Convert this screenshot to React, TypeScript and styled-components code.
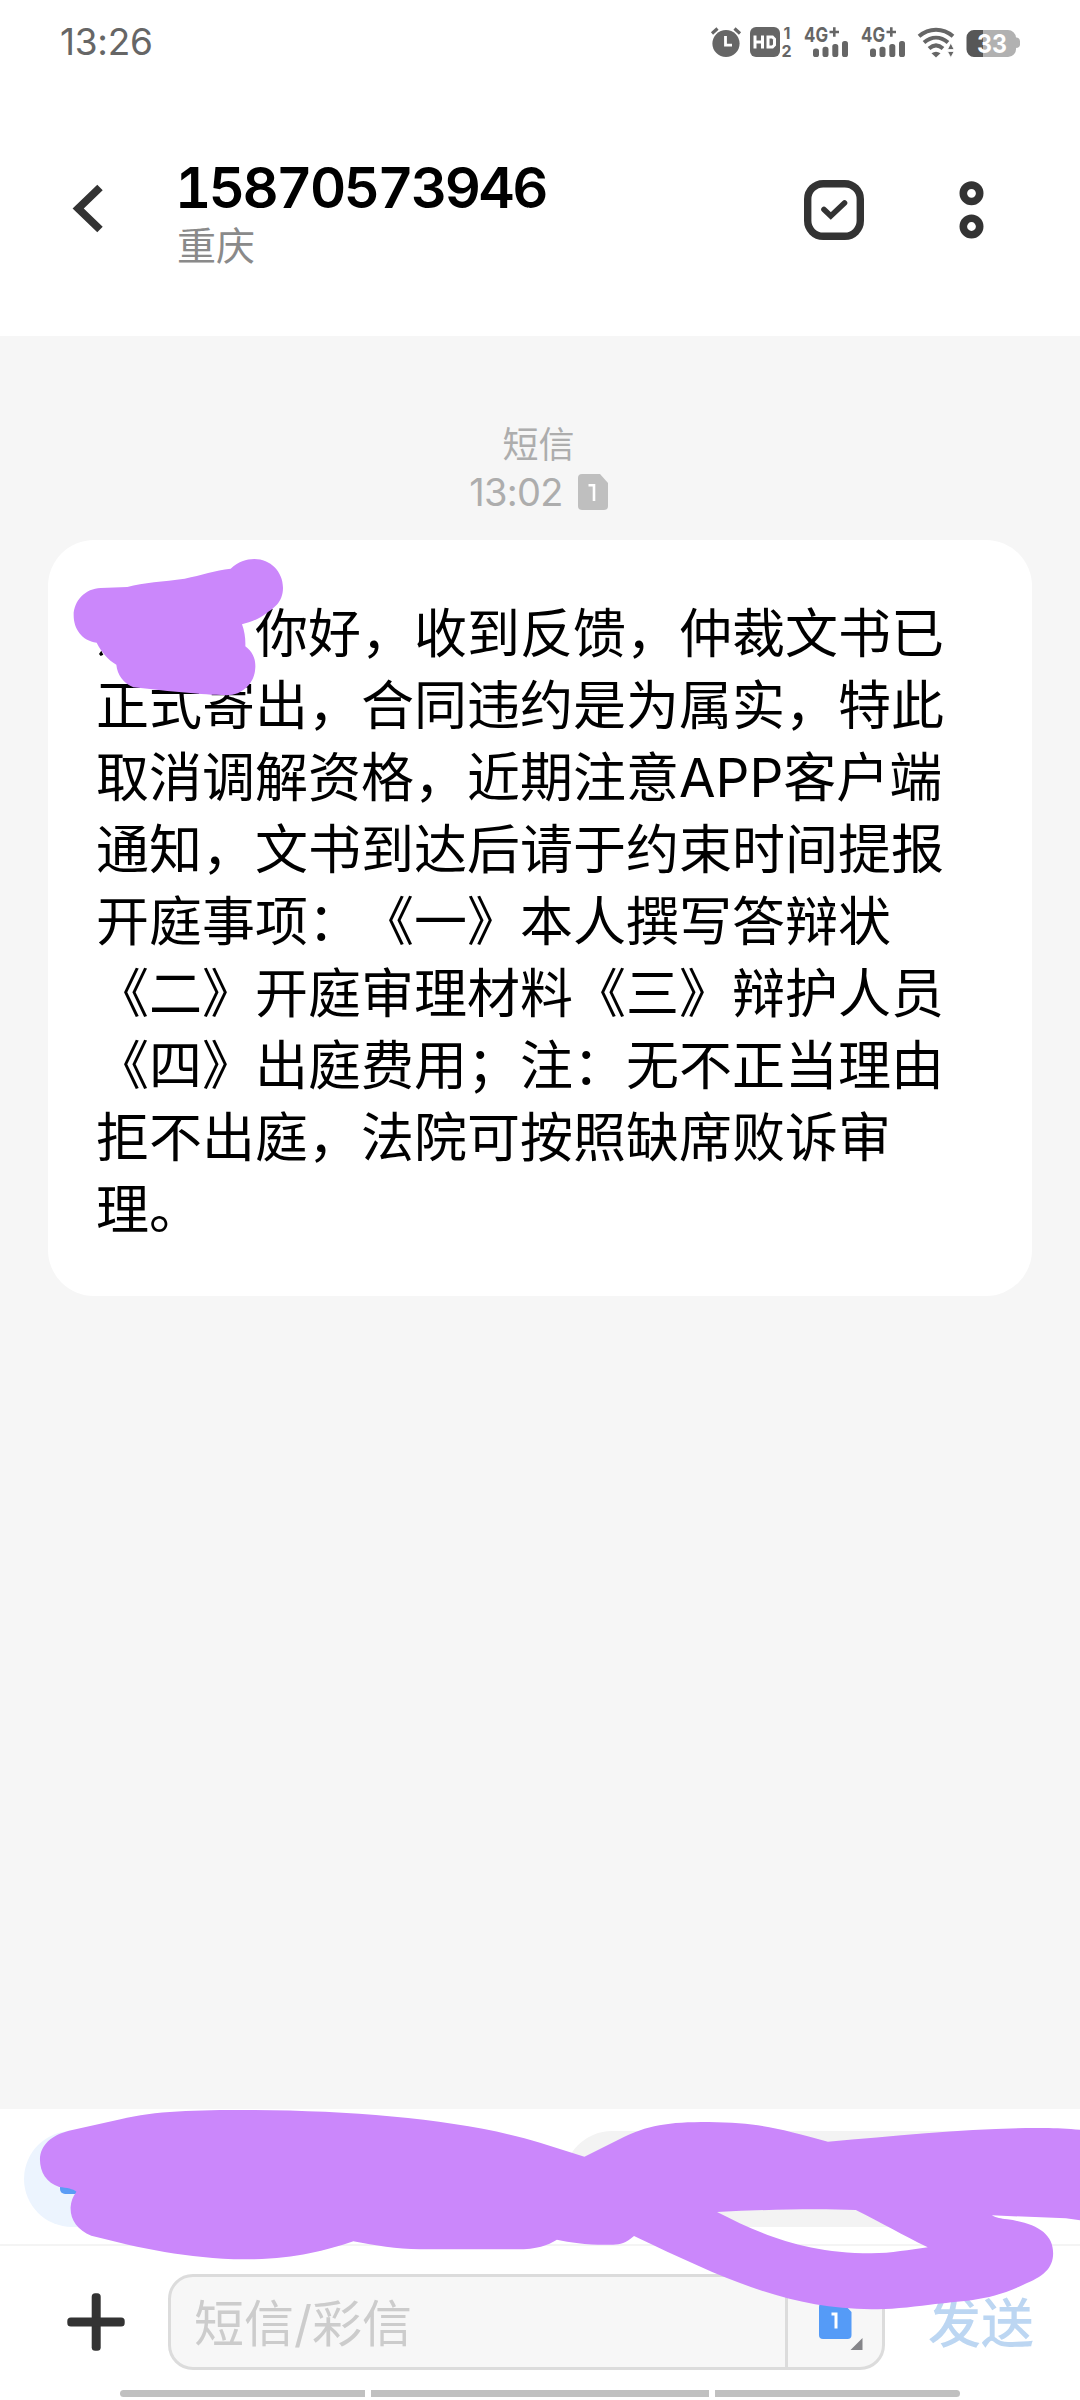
import React from 'react';
import styled, { createGlobalStyle } from 'styled-components';

const Global = createGlobalStyle`
  * { box-sizing: border-box; }
  body { margin: 0; background: #fff; }
`;

const Screen = styled.div`
  width: 1080px;
  height: 2400px;
  display: flex;
  flex-direction: column;
  overflow: hidden;
  background: #fff;
  font-family: Inter, 'Noto Sans CJK SC', sans-serif;
  text-spacing-trim: space-all;
`;

const StatusBar = styled.div`
  height: 84px;
  padding: 0 60px;
  display: flex;
  justify-content: space-between;
  align-items: center;
`;

const Clock = styled.span`
  font-size: 37px;
  line-height: 44px;
  letter-spacing: -0.3px;
  color: #666;
`;

const StatusIcons = styled.svg`
  width: 312px;
  height: 40px;
  font-family: Inter, sans-serif;
`;

const Header = styled.header`
  height: 252px;
  padding: 70px 94px 0 70px;
  display: flex;
  align-items: flex-start;
`;

const BackButton = styled.button`
  width: 36px;
  height: 52px;
  margin: 28px 69px 0 0;
  padding: 0;
  border: 0;
  background: none;
`;

const Contact = styled.div`
  flex: 1;
  display: flex;
  flex-direction: column;
`;

const PhoneNumber = styled.h1`
  margin: 0;
  font-size: 56px;
  font-weight: 600;
  line-height: 68px;
  letter-spacing: -2.5px;
  font-variant-numeric: tabular-nums;
  color: #000;
`;

const Region = styled.span`
  font-size: 39px;
  line-height: 46px;
  margin: 1px 0 0 2px;
  color: #8a8a8a;
`;

const HeaderActions = styled.div`
  margin-top: 24px;
  display: flex;
  gap: 92px;
`;

const Conversation = styled.main`
  flex: 1;
  padding: 86px 48px 0;
  background: #f6f6f6;
`;

const Stamp = styled.div`
  height: 118px;
  padding-right: 3px;
  display: flex;
  flex-direction: column;
  align-items: center;
  color: #adadad;
`;

const StampKind = styled.span`
  font-size: 36px;
  line-height: 47px;
`;

const StampTime = styled.div`
  display: flex;
  align-items: center;
  gap: 15px;
  font-size: 38px;
  line-height: 46px;
  letter-spacing: -0.7px;
`;

const Bubble = styled.article`
  position: relative;
  height: 756px;
  padding: 58px 48px 50px;
  border-radius: 46px;
  background: #fff;
`;

const Line = styled.p<{ $indent?: number }>`
  margin: 0 0 0 ${(p) => (p.$indent ?? 0) * 53}px;
  font-size: 53px;
  line-height: 72px;
  white-space: nowrap;
  color: #000;
`;

const BubbleScribble = styled.svg`
  position: absolute;
  left: -8px;
  top: -20px;
  width: 300px;
  height: 200px;
`;

const Footer = styled.footer`
  position: relative;
  height: 291px;
  background: #fff;
`;

const Chips = styled.div`
  height: 137px;
  padding: 22px 80px 0 24px;
  display: flex;
  justify-content: space-between;
  border-bottom: 2px solid #f4f4f4;
`;

const Chip = styled.div<{ $color: string; $width: number }>`
  width: ${(p) => p.$width}px;
  height: 96px;
  padding: 53px 36px 0;
  border-radius: 48px;
  background: ${(p) => p.$color};
`;

const ChipIcon = styled.div`
  width: 34px;
  height: 10px;
  border-radius: 0 0 5px 5px;
  background: #5a9cf5;
`;

const Composer = styled.div`
  height: 144px;
  padding: 28px 0 0 67px;
  display: flex;
  align-items: flex-start;
`;

const PlusIcon = styled.svg`
  width: 58px;
  height: 58px;
  margin: 19px 43px 0 0;
`;

const InputBox = styled.div`
  width: 717px;
  height: 96px;
  display: flex;
  border: 3px solid #dcdcdc;
  border-radius: 25px;
  background: #f7f7f7;
`;

const Placeholder = styled.span`
  flex: 1;
  padding-left: 23px;
  font-size: 50px;
  line-height: 95px;
  color: #ccc;
`;

const SimPicker = styled.div`
  width: 97px;
  border-left: 3px solid #dcdcdc;
`;

const SendLabel = styled.span`
  margin-left: 43px;
  font-size: 53px;
  line-height: 101px;
  font-weight: 500;
  color: #bcd6f2;
`;

const NavBars = styled.div`
  display: grid;
  grid-template-columns: 245px 338px 245px;
  gap: 6px;
  padding: 0 120px;
`;

const NavBar = styled.div<{ $radius?: string }>`
  height: 7px;
  border-radius: ${(p) => p.$radius ?? '0'};
  background: #c0c0c0;
`;

const FooterScribble = styled.svg`
  position: absolute;
  inset: 0 0 auto 0;
  width: 1080px;
  height: 291px;
`;

const PURPLE = '#cb87fb';

const lines = [
  '正式寄出，合同违约是为属实，特此',
  '取消调解资格，近期注意APP客户端',
  '通知，文书到达后请于约束时间提报',
  '开庭事项：《一》本人撰写答辩状',
  '《二》开庭审理材料《三》辩护人员',
  '《四》出庭费用；注：无不正当理由',
  '拒不出庭，法院可按照缺席败诉审',
  '理。',
];

const Signal = ({ x }: { x: number }) => (
  <g transform={`translate(${x} 0)`} fill="#666">
    <text x="0" y="20" fontSize="20.5" fontWeight="700" textLength="24" lengthAdjust="spacingAndGlyphs">4G</text>
    <path d="M25.500 10h9.500M30.300 5.300v9.500" stroke="#666" strokeWidth="2.600" />
    <rect x="9" y="26.500" width="6" height="8.500" rx="2.600" />
    <rect x="18.500" y="24.800" width="6" height="10.200" rx="2.600" />
    <rect x="28.300" y="22" width="6" height="13" rx="2.600" />
    <rect x="38" y="19" width="6" height="16" rx="2.600" />
  </g>
);

export default function App() {
  return (
    <Screen>
      <Global />
      <StatusBar>
        <Clock>13:26</Clock>
        <StatusIcons viewBox="0 0 312 40">
          <circle cx="18" cy="21.500" r="13.600" fill="#666" />
          <path d="M4 11.500l5.500-5M32 11.500l-5.500-5" stroke="#666" strokeWidth="3.200" />
          <path d="M17.500 14v9.200h6.500" stroke="#fff" strokeWidth="2.800" fill="none" />
          <rect x="42" y="5" width="30" height="30" rx="6" fill="#666" />
          <path d="M47 13.500v13M54.500 13.500v13M47 20h8M60 15v10h4.500l2-2v-6l-2-2z" stroke="#fff" strokeWidth="3" fill="none" />
          <text x="75.500" y="16.500" fontSize="16" fontWeight="700" fill="#666">1</text>
          <text x="73.500" y="34.800" fontSize="16" fontWeight="700" fill="#666">2</text>
          <Signal x={96} />
          <Signal x={153} />
          <g fill="none" stroke="#666" strokeWidth="4">
            <path d="M211 14.200C221 5.500 235 5.500 245 14.200" />
            <path d="M216 20.500C223.500 14 232.500 14 240 20.500" />
            <path d="M221 26.500C225.500 22.500 230.500 22.500 235 26.500" />
          </g>
          <path d="M223.500 31.300q4.500-3 9 0L228 35.500z" fill="#666" />
          <path d="M239.500 27.500l3.300-6.500 3.300 6.500zM239.500 29.500h6.600l-3.300 6z" fill="#666" stroke="#fff" strokeWidth="0.800" />
          <path d="M265.500 8H300a8 8 0 0 1 8 7.500c2.500 0 4 1.500 4 4v3c0 2-1.500 3.500-4 3.500a8 8 0 0 1-8 9H265.500z" fill="#b1b1b1" />
          <path d="M275 8v27h-9a7.500 7.500 0 0 1-7.500-7.500v-12A7.500 7.500 0 0 1 266 8z" fill="#575757" />
          <text x="269" y="31" fontSize="26" fontWeight="700" fill="#fff" textLength="30" lengthAdjust="spacingAndGlyphs">33</text>
        </StatusIcons>
      </StatusBar>

      <Header>
        <BackButton aria-label="back">
          <svg width="36" height="52" viewBox="0 0 36 52">
            <path d="M30 5.500L8.200 26.500L30 47.500" fill="none" stroke="#333" strokeWidth="7.800" />
          </svg>
        </BackButton>
        <Contact>
          <PhoneNumber>15870573946</PhoneNumber>
          <Region>重庆</Region>
        </Contact>
        <HeaderActions>
          <svg width="64" height="64" viewBox="0 0 64 64">
            <rect x="5.700" y="5.700" width="52.600" height="52.600" rx="15.500" fill="none" stroke="#333" strokeWidth="7.400" />
            <path d="M22 31.500L28.800 38L42.500 25" fill="none" stroke="#333" strokeWidth="5.600" strokeLinecap="round" />
          </svg>
          <svg width="28" height="64" viewBox="0 0 28 64">
            <circle cx="13.500" cy="15.300" r="8.200" fill="none" stroke="#333" strokeWidth="7.600" />
            <circle cx="13.500" cy="48.500" r="8.200" fill="none" stroke="#333" strokeWidth="7.600" />
          </svg>
        </HeaderActions>
      </Header>

      <Conversation>
        <Stamp>
          <StampKind>短信</StampKind>
          <StampTime>
            <span>13:02</span>
            <svg width="30" height="36" viewBox="0 0 30 36">
              <path d="M4 0H22L30 9V32a4 4 0 0 1-4 4H4a4 4 0 0 1-4-4V4a4 4 0 0 1 4-4z" fill="#bfbfbf" />
              <path d="M10.500 11.200h5.500V27" fill="none" stroke="#fff" strokeWidth="2.600" />
            </svg>
          </StampTime>
        </Stamp>
        <Bubble>
          <Line $indent={3}>你好，收到反馈，仲裁文书已</Line>
          {lines.map((line) => (
            <Line key={line}>{line}</Line>
          ))}
          <BubbleScribble viewBox="0 0 900 600">
            <path d="M177 402l7-10 6 12-8 4z" fill="#000" />
            <path
              fill={PURPLE}
              d="M182 204L262 201C310 187 370 185 434 176C485 165 525 151 572 146C594 125 619 117 643 117C691 117 729 155 729 203C729 248 698 266 680 279C657 298 629 307 606 313C614 335 617 357 616 379C637 395 647 415 646 442C645 490 607 526 560 526C480 524 400 515 280 502C250 489 232 464 229 434C205 420 184 396 170 368C125 363 101 326 101 286C101 242 137 205 182 204Z"
            />
          </BubbleScribble>
        </Bubble>
      </Conversation>

      <Footer>
        <Chips>
          <Chip $color="#ecf4fe" $width={500}>
            <ChipIcon />
          </Chip>
          <Chip $color="#f3f3f3" $width={436} />
        </Chips>
        <Composer>
          <PlusIcon viewBox="0 0 58 58">
            <rect x="24.700" y="0.300" width="9" height="57.400" rx="3.500" fill="#333" />
            <rect x="0.300" y="24.500" width="57.400" height="9" rx="3.500" fill="#333" />
          </PlusIcon>
          <InputBox>
            <Placeholder>短信/彩信</Placeholder>
            <SimPicker>
              <svg width="94" height="90" viewBox="0 0 94 90">
                <path d="M35 26H55L63.500 35V58a4 4 0 0 1-4 4H35a4 4 0 0 1-4-4V30a4 4 0 0 1 4-4z" fill="#559bf7" />
                <path d="M43.500 37h4.500V51.500" fill="none" stroke="#fff" strokeWidth="3" />
                <path d="M74.500 61V73H62.500z" fill="#858589" />
              </svg>
            </SimPicker>
          </InputBox>
          <SendLabel>发送</SendLabel>
        </Composer>
        <NavBars>
          <NavBar $radius="4px 0 0 4px" />
          <NavBar />
          <NavBar $radius="0 4px 4px 0" />
        </NavBars>
        <FooterScribble viewBox="0 57 3136 873" preserveAspectRatio="none">
          <path
            fill={PURPLE}
            fillRule="evenodd"
            d="M200 122L350 88C450 62 570 60 720 60C1050 62 1350 90 1568 158L1697 200L1800 147C1880 105 1940 96 2058 96C2200 98 2260 114 2404 155C2620 135 2850 112 3030 114C3070 114 3100 117 3136 119V391L3095 385L2880 376C2895 385 2905 385 2925 388C3010 400 3058 430 3058 490C3058 535 3030 560 2970 585C2870 635 2790 632 2700 644C2640 652 2580 658 2530 658C2290 655 2120 575 1841 438C1815 460 1803 464 1780 464C1710 466 1660 458 1617 449C1590 466 1560 478 1500 478H1220C1150 478 1090 466 1026 454C940 484 850 508 710 508C540 505 410 475 265 437C225 420 204 390 205 352C206 335 211 320 222 305C212 296 195 294 172 291C135 278 116 248 116 208C117 165 150 135 200 122ZM2082 366C2200 428 2330 490 2530 490C2590 490 2640 479 2694 472C2620 435 2560 398 2485 360C2380 356 2230 358 2082 366Z"
          />
        </FooterScribble>
      </Footer>
    </Screen>
  );
}
